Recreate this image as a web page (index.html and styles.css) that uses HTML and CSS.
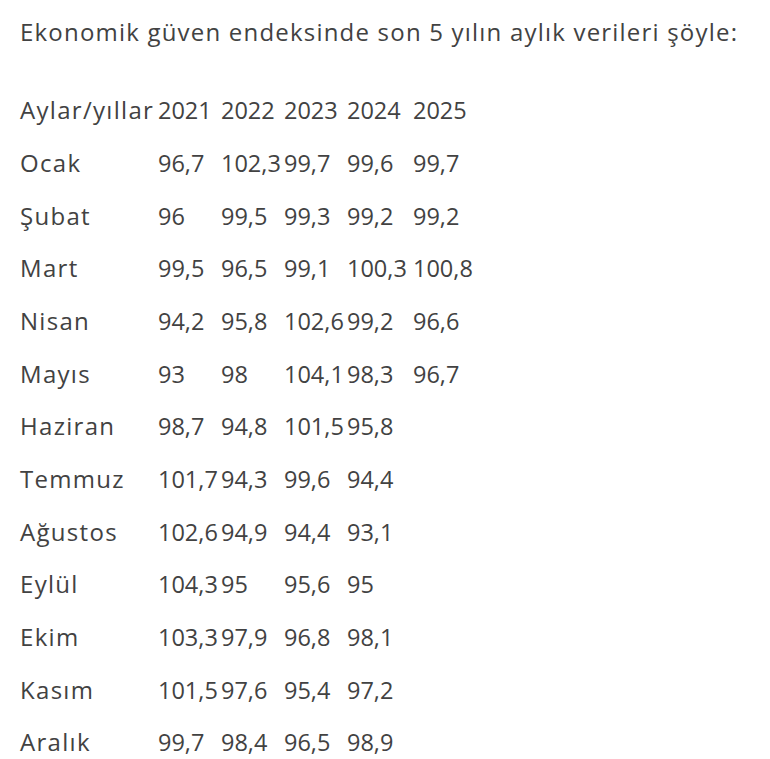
FILE: index.html
```html
<!DOCTYPE html>
<html lang="tr">
<head>
<meta charset="utf-8">
<title>Ekonomik güven endeksi</title>
<link rel="stylesheet" href="styles.css">
</head>
<body>
<main class="article">
  <p class="intro">Ekonomik güven endeksinde son 5 yılın aylık verileri şöyle:</p>
  <table class="data">
    <colgroup>
      <col class="c-label"><col class="c-y"><col class="c-y"><col class="c-y"><col class="c-y4"><col class="c-y">
    </colgroup>
    <tbody>
      <tr><td>Aylar/yıllar</td><td>2021</td><td>2022</td><td>2023</td><td>2024</td><td>2025</td></tr>
      <tr><td>Ocak</td><td>96,7</td><td>102,3</td><td>99,7</td><td>99,6</td><td>99,7</td></tr>
      <tr><td>Şubat</td><td>96</td><td>99,5</td><td>99,3</td><td>99,2</td><td>99,2</td></tr>
      <tr><td>Mart</td><td>99,5</td><td>96,5</td><td>99,1</td><td>100,3</td><td>100,8</td></tr>
      <tr><td>Nisan</td><td>94,2</td><td>95,8</td><td>102,6</td><td>99,2</td><td>96,6</td></tr>
      <tr><td>Mayıs</td><td>93</td><td>98</td><td>104,1</td><td>98,3</td><td>96,7</td></tr>
      <tr><td>Haziran</td><td>98,7</td><td>94,8</td><td>101,5</td><td>95,8</td><td></td></tr>
      <tr><td>Temmuz</td><td>101,7</td><td>94,3</td><td>99,6</td><td>94,4</td><td></td></tr>
      <tr><td>Ağustos</td><td>102,6</td><td>94,9</td><td>94,4</td><td>93,1</td><td></td></tr>
      <tr><td>Eylül</td><td>104,3</td><td>95</td><td>95,6</td><td>95</td><td></td></tr>
      <tr><td>Ekim</td><td>103,3</td><td>97,9</td><td>96,8</td><td>98,1</td><td></td></tr>
      <tr><td>Kasım</td><td>101,5</td><td>97,6</td><td>95,4</td><td>97,2</td><td></td></tr>
      <tr><td>Aralık</td><td>99,7</td><td>98,4</td><td>96,5</td><td>98,9</td><td></td></tr>
    </tbody>
  </table>
</main>
</body>
</html>
```

FILE: styles.css
```css
html, body {
  margin: 0;
  padding: 0;
  background: #ffffff;
}
body {
  font-family: "Open Sans", "Liberation Sans", sans-serif;
  color: #424242;
}
.article {
  padding: 17px 20px 0 20px;
}
.intro {
  margin: 0;
  font-size: 24px;
  line-height: 30px;
  letter-spacing: 1.2px;
  white-space: nowrap;
}
.data {
  margin-top: 37px;
  border-collapse: collapse;
  border-spacing: 0;
  table-layout: fixed;
  font-size: 23.5px;
}
.data td {
  padding: 0;
  height: 52.67px;
  line-height: 30px;
  vertical-align: middle;
  white-space: nowrap;
}
.data td:first-child {
  font-size: 24px;
  letter-spacing: 1.3px;
}
.c-label { width: 138px; }
.c-y { width: 63px; }
.c-y4 { width: 66px; }
```
